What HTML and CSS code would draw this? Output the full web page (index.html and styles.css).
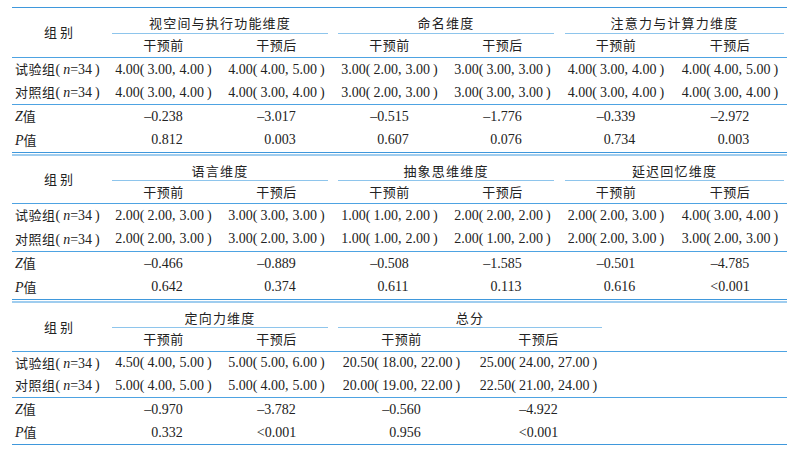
FILE: index.html
```html
<!DOCTYPE html>
<html lang="zh">
<head>
<meta charset="utf-8">
<title>量表维度比较</title>
<link rel="stylesheet" href="styles.css">
</head>
<body>
<div class="page">

<table class="tbl t1">
  <colgroup><col class="c0"><col class="c1"><col class="c1"><col class="c1"><col class="c1"><col class="c2"><col class="c2"></colgroup>
  <thead>
    <tr class="h1">
      <th class="corner" rowspan="2"><span class="zh cz">组别</span></th>
      <th class="grp" colspan="2"><div class="gl zh">视空间与执行功能维度</div></th>
      <th class="grp" colspan="2"><div class="gl zh">命名维度</div></th>
      <th class="grp" colspan="2"><div class="gl zh gl-last">注意力与计算力维度</div></th>
    </tr>
    <tr class="sub">
      <th><span class="zh">干预前</span></th><th><span class="zh">干预后</span></th>
      <th><span class="zh">干预前</span></th><th><span class="zh">干预后</span></th>
      <th><span class="zh">干预前</span></th><th><span class="zh">干预后</span></th>
    </tr>
  </thead>
  <tbody>
    <tr class="d">
      <td class="lab"><span class="zh">试验组</span><span class="po">(</span><i>n</i>=34<span class="pe">)</span></td>
      <td>4.00<span class="po">(</span>3.00<span class="pc">,</span>4.00<span class="pe">)</span></td>
      <td>4.00<span class="po">(</span>4.00<span class="pc">,</span>5.00<span class="pe">)</span></td>
      <td>3.00<span class="po">(</span>2.00<span class="pc">,</span>3.00<span class="pe">)</span></td>
      <td>3.00<span class="po">(</span>3.00<span class="pc">,</span>3.00<span class="pe">)</span></td>
      <td>4.00<span class="po">(</span>3.00<span class="pc">,</span>4.00<span class="pe">)</span></td>
      <td>4.00<span class="po">(</span>4.00<span class="pc">,</span>5.00<span class="pe">)</span></td>
    </tr>
    <tr class="d sep">
      <td class="lab"><span class="zh">对照组</span><span class="po">(</span><i>n</i>=34<span class="pe">)</span></td>
      <td>4.00<span class="po">(</span>3.00<span class="pc">,</span>4.00<span class="pe">)</span></td>
      <td>4.00<span class="po">(</span>3.00<span class="pc">,</span>4.00<span class="pe">)</span></td>
      <td>3.00<span class="po">(</span>2.00<span class="pc">,</span>3.00<span class="pe">)</span></td>
      <td>3.00<span class="po">(</span>3.00<span class="pc">,</span>3.00<span class="pe">)</span></td>
      <td>4.00<span class="po">(</span>3.00<span class="pc">,</span>4.00<span class="pe">)</span></td>
      <td>4.00<span class="po">(</span>3.00<span class="pc">,</span>4.00<span class="pe">)</span></td>
    </tr>
    <tr class="s">
      <td class="lab"><i>Z</i><span class="zh">值</span></td>
      <td>–0.238</td><td>–3.017</td><td>–0.515</td><td>–1.776</td><td>–0.339</td><td>–2.972</td>
    </tr>
    <tr class="s">
      <td class="lab"><i>P</i><span class="zh">值</span></td>
      <td><span class="ph">–</span>0.812</td><td><span class="ph">–</span>0.003</td><td><span class="ph">–</span>0.607</td><td><span class="ph">–</span>0.076</td><td><span class="ph">–</span>0.734</td><td><span class="ph">–</span>0.003</td>
    </tr>
  </tbody>
</table>

<table class="tbl t2">
  <colgroup><col class="c0"><col class="c1"><col class="c1"><col class="c1"><col class="c1"><col class="c2"><col class="c2"></colgroup>
  <thead>
    <tr class="h1">
      <th class="corner" rowspan="2"><span class="zh cz">组别</span></th>
      <th class="grp" colspan="2"><div class="gl zh">语言维度</div></th>
      <th class="grp" colspan="2"><div class="gl zh">抽象思维维度</div></th>
      <th class="grp" colspan="2"><div class="gl zh gl-last">延迟回忆维度</div></th>
    </tr>
    <tr class="sub">
      <th><span class="zh">干预前</span></th><th><span class="zh">干预后</span></th>
      <th><span class="zh">干预前</span></th><th><span class="zh">干预后</span></th>
      <th><span class="zh">干预前</span></th><th><span class="zh">干预后</span></th>
    </tr>
  </thead>
  <tbody>
    <tr class="d">
      <td class="lab"><span class="zh">试验组</span><span class="po">(</span><i>n</i>=34<span class="pe">)</span></td>
      <td>2.00<span class="po">(</span>2.00<span class="pc">,</span>3.00<span class="pe">)</span></td>
      <td>3.00<span class="po">(</span>3.00<span class="pc">,</span>3.00<span class="pe">)</span></td>
      <td>1.00<span class="po">(</span>1.00<span class="pc">,</span>2.00<span class="pe">)</span></td>
      <td>2.00<span class="po">(</span>2.00<span class="pc">,</span>2.00<span class="pe">)</span></td>
      <td>2.00<span class="po">(</span>2.00<span class="pc">,</span>3.00<span class="pe">)</span></td>
      <td>4.00<span class="po">(</span>3.00<span class="pc">,</span>4.00<span class="pe">)</span></td>
    </tr>
    <tr class="d sep">
      <td class="lab"><span class="zh">对照组</span><span class="po">(</span><i>n</i>=34<span class="pe">)</span></td>
      <td>2.00<span class="po">(</span>2.00<span class="pc">,</span>3.00<span class="pe">)</span></td>
      <td>3.00<span class="po">(</span>2.00<span class="pc">,</span>3.00<span class="pe">)</span></td>
      <td>1.00<span class="po">(</span>1.00<span class="pc">,</span>2.00<span class="pe">)</span></td>
      <td>2.00<span class="po">(</span>1.00<span class="pc">,</span>2.00<span class="pe">)</span></td>
      <td>2.00<span class="po">(</span>2.00<span class="pc">,</span>3.00<span class="pe">)</span></td>
      <td>3.00<span class="po">(</span>2.00<span class="pc">,</span>3.00<span class="pe">)</span></td>
    </tr>
    <tr class="s">
      <td class="lab"><i>Z</i><span class="zh">值</span></td>
      <td>–0.466</td><td>–0.889</td><td>–0.508</td><td>–1.585</td><td>–0.501</td><td>–4.785</td>
    </tr>
    <tr class="s">
      <td class="lab"><i>P</i><span class="zh">值</span></td>
      <td><span class="ph">–</span>0.642</td><td><span class="ph">–</span>0.374</td><td><span class="ph">–</span>0.611</td><td><span class="ph">–</span>0.113</td><td><span class="ph">–</span>0.616</td><td>&lt;0.001</td>
    </tr>
  </tbody>
</table>

<table class="tbl t3">
  <colgroup><col class="c0"><col class="c1"><col class="c1"><col class="c3"><col class="c3"><col class="c4"></colgroup>
  <thead>
    <tr class="h1">
      <th class="corner" rowspan="2"><span class="zh cz">组别</span></th>
      <th class="grp" colspan="2"><div class="gl zh">定向力维度</div></th>
      <th class="grp" colspan="2"><div class="gl zh">总分</div></th>
      <th></th>
    </tr>
    <tr class="sub">
      <th><span class="zh">干预前</span></th><th><span class="zh">干预后</span></th>
      <th><span class="zh">干预前</span></th><th><span class="zh">干预后</span></th>
      <th></th>
    </tr>
  </thead>
  <tbody>
    <tr class="d">
      <td class="lab"><span class="zh">试验组</span><span class="po">(</span><i>n</i>=34<span class="pe">)</span></td>
      <td>4.50<span class="po">(</span>4.00<span class="pc">,</span>5.00<span class="pe">)</span></td>
      <td>5.00<span class="po">(</span>5.00<span class="pc">,</span>6.00<span class="pe">)</span></td>
      <td>20.50<span class="po">(</span>18.00<span class="pc">,</span>22.00<span class="pe">)</span></td>
      <td>25.00<span class="po">(</span>24.00<span class="pc">,</span>27.00<span class="pe">)</span></td>
      <td></td>
    </tr>
    <tr class="d sep">
      <td class="lab"><span class="zh">对照组</span><span class="po">(</span><i>n</i>=34<span class="pe">)</span></td>
      <td>5.00<span class="po">(</span>4.00<span class="pc">,</span>5.00<span class="pe">)</span></td>
      <td>5.00<span class="po">(</span>4.00<span class="pc">,</span>5.00<span class="pe">)</span></td>
      <td>20.00<span class="po">(</span>19.00<span class="pc">,</span>22.00<span class="pe">)</span></td>
      <td>22.50<span class="po">(</span>21.00<span class="pc">,</span>24.00<span class="pe">)</span></td>
      <td></td>
    </tr>
    <tr class="s">
      <td class="lab"><i>Z</i><span class="zh">值</span></td>
      <td>–0.970</td><td>–3.782</td><td>–0.560</td><td>–4.922</td><td></td>
    </tr>
    <tr class="s">
      <td class="lab"><i>P</i><span class="zh">值</span></td>
      <td><span class="ph">–</span>0.332</td><td>&lt;0.001</td><td><span class="ph">–</span>0.956</td><td>&lt;0.001</td><td></td>
    </tr>
  </tbody>
</table>

</div>
</body>
</html>
```

FILE: styles.css
```css
* { box-sizing: border-box; }

html, body {
  margin: 0;
  padding: 0;
  background: #ffffff;
}

body {
  font-family: "Liberation Serif", "Noto Sans CJK SC", serif;
  font-size: 14px;
  color: #222222;
}

.page {
  padding: 7px 13px 0 12px;
}

.tbl {
  width: 775px;
  table-layout: fixed;
  border-collapse: separate;
  border-spacing: 0;
  border-top: 1px solid #3f98dc;
  border-bottom: 1px solid #3f98dc;
}

.tbl + .tbl {
  margin-top: 1px;
  border-top: 2px solid #9fcdef;
}

.c0 { width: 95px; }
.c1 { width: 113px; }
.c2 { width: 114px; }
.c3 { width: 137px; }
.c4 { width: 180px; }

.tbl th,
.tbl td {
  padding: 0;
  font-weight: normal;
  text-align: center;
  white-space: nowrap;
  line-height: 16px;
  vertical-align: middle;
}

.zh {
  font-family: "Noto Sans CJK SC", sans-serif;
  font-size: 13px;
  letter-spacing: 0.5px;
}

.cz {
  letter-spacing: 3px;
  padding-left: 1px;
}

.tbl th.corner {
  border-bottom: 1px solid #4ea3e2;
}

.tbl th.grp {
  vertical-align: top;
}

.gl {
  margin: 0 5px;
  padding-top: 6px;
  line-height: 18px;
  letter-spacing: 1.2px;
  border-bottom: 1px solid #8ec5ec;
}

.gl-last {
  margin: 0 3px 0 6px;
}

.sub th {
  border-bottom: 1px solid #4ea3e2;
}

.tbl td.lab {
  text-align: left;
  padding-left: 3px;
}

.sep td {
  border-bottom: 1px solid #4ea3e2;
}

.po { padding-right: 3px; }
.pc { padding-right: 4px; }
.pe { padding-left: 3px; }
.ph { visibility: hidden; }

/* section-specific row heights */
.t1 .gl { height: 26px; }
.t1 .sub { height: 24px; }
.t1 .d { height: 23px; }
.t1 .sep { height: 24px; }
.t1 .s { height: 23.5px; }

.t2 .gl { height: 25px; }
.t2 .sub { height: 23px; }
.t2 .d { height: 23.5px; }
.t2 .sep { height: 24.5px; }
.t2 .s { height: 23.5px; }

.t3 .gl { height: 25px; }
.t3 .sub { height: 24px; }
.t3 .d { height: 22.5px; }
.t3 .sep { height: 23.5px; }
.t3 .s { height: 23px; }
```
